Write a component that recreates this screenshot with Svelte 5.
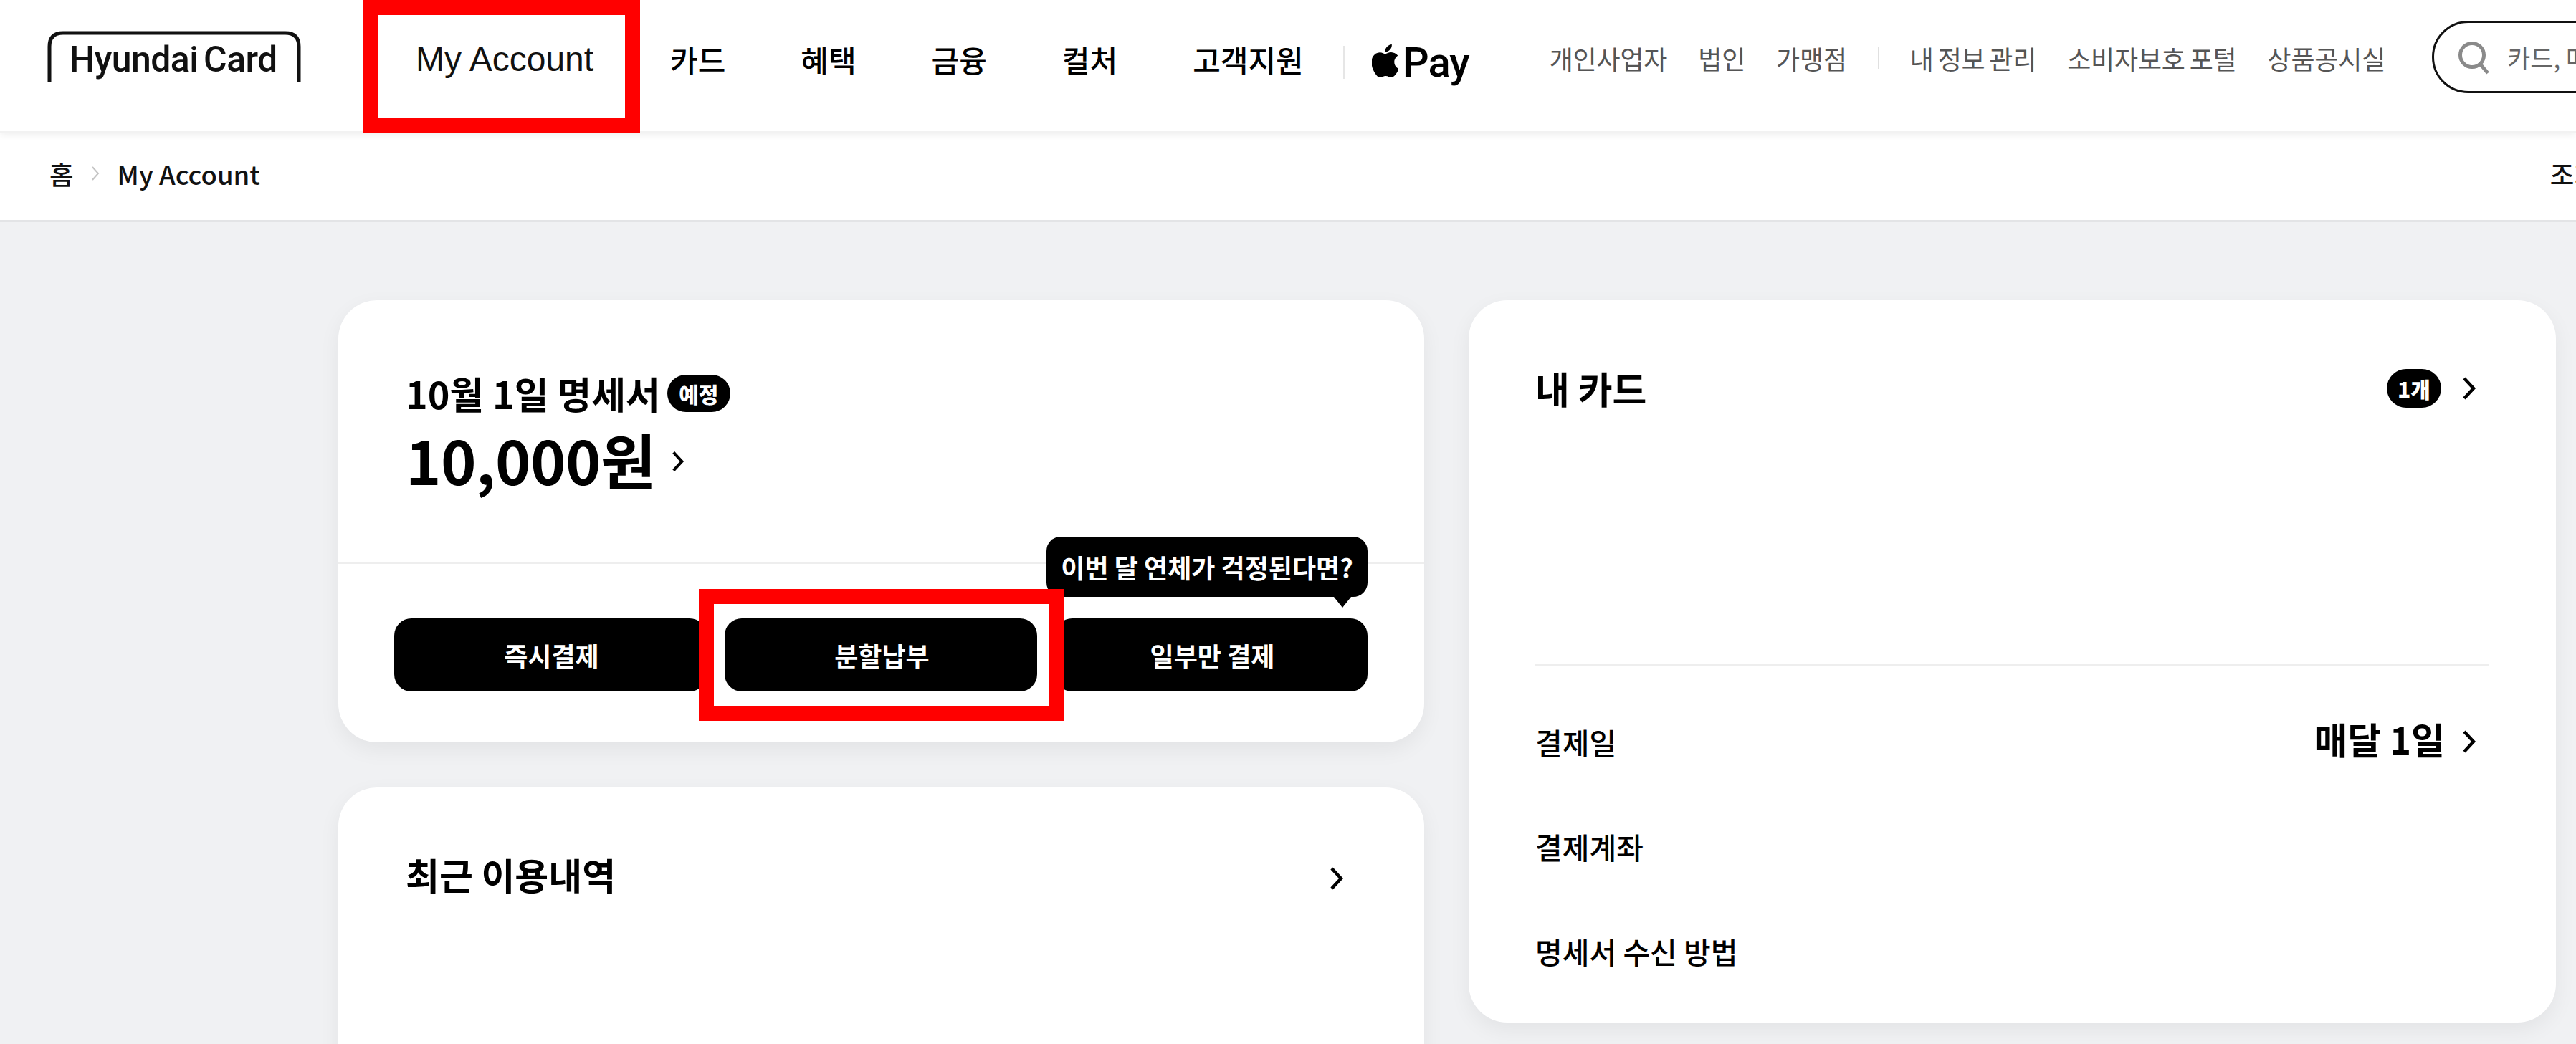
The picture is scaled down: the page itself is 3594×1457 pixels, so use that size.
<script>
  const menus = ['카드', '혜택', '금융', '컬처', '고객지원'];
  const linksA = ['개인사업자', '법인', '가맹점'];
  const linksB = ['내 정보 관리', '소비자보호 포털', '상품공시실'];
  const actions = ['즉시결제', '분할납부', '일부만 결제'];
</script>

{#snippet chevron(cls)}
  <svg class={'chevron ' + cls} viewBox="0 0 20 32" fill="none" aria-hidden="true">
    <path d="M3 2 L16 16 L3 30" stroke="currentColor" stroke-width="4.5" />
  </svg>
{/snippet}

<div class="page">
  <header class="header">
    <a class="logo" href="#top">
      <svg class="logo-tab" viewBox="0 0 354 71" fill="none" aria-hidden="true">
        <path d="M3 71 V22 Q3 3 22 3 H332 Q351 3 351 22 V71" stroke="#111" stroke-width="5" />
      </svg>
      <span class="logo-text">Hyundai Card</span>
    </a>

    <a class="menu-my" href="#top">My Account</a>

    <nav class="menus">
      {#each menus as menu}
        <a class="menu" href="#top">{menu}</a>
      {/each}
    </nav>

    <span class="menu-sep"></span>

    <a class="pay" href="#top">
      <svg class="apple" viewBox="2.5 0 19 24" preserveAspectRatio="none" aria-hidden="true">
        <path fill="#000" d="M12.152 6.896c-.948 0-2.415-1.078-3.96-1.04-2.04.027-3.91 1.183-4.961 3.014-2.117 3.675-.546 9.103 1.519 12.09 1.013 1.454 2.208 3.09 3.792 3.039 1.52-.065 2.09-.987 3.935-.987 1.831 0 2.35.987 3.96.948 1.637-.026 2.676-1.48 3.676-2.948 1.156-1.688 1.636-3.325 1.662-3.415-.039-.013-3.182-1.221-3.22-4.857-.026-3.04 2.48-4.494 2.597-4.559-1.429-2.09-3.623-2.324-4.39-2.376-2-.156-3.675 1.09-4.61 1.09zM15.53 3.83c.843-1.012 1.4-2.427 1.245-3.83-1.207.052-2.662.805-3.532 1.818-.78.896-1.454 2.338-1.273 3.714 1.338.104 2.715-.688 3.559-1.701" />
      </svg>
      <span>Pay</span>
    </a>

    <div class="links">
      {#each linksA as link}
        <a href="#top">{link}</a>
      {/each}
      <span class="link-sep"></span>
      {#each linksB as link}
        <a href="#top">{link}</a>
      {/each}
    </div>

    <div class="search">
      <svg class="search-icon" viewBox="0 0 44 46" fill="none" aria-hidden="true">
        <circle cx="20" cy="19" r="16.5" stroke="#8a8a8a" stroke-width="5" />
        <path d="M31 31 L42 44" stroke="#8a8a8a" stroke-width="5" />
      </svg>
      <span class="search-text">카드, 매장, 혜택 검색</span>
    </div>
  </header>

  <div class="crumbs">
    <div class="crumb-path">
      <span>홈</span>
      <svg class="crumb-arrow" viewBox="0 0 11 20" fill="none" aria-hidden="true">
        <path d="M1 1 L9 10 L1 19" stroke="#c4c4c4" stroke-width="2" />
      </svg>
      <span>My Account</span>
    </div>
    <span class="crumb-side">조회</span>
  </div>

  <main class="main">
    <div class="col">
      <section class="card statement">
        <div class="statement-top">
          <div class="statement-title">
            <span>10월 1일 명세서</span>
            <span class="badge due">예정</span>
          </div>
          <div class="amount">
            <span>10,000원</span>
            {@render chevron('amount-arrow')}
          </div>
        </div>
        <div class="actions">
          {#each actions as action, i}
            <div class="action">
              <button class="btn" type="button">{action}</button>
              {#if i === 1}
                <span class="mark"></span>
              {/if}
              {#if i === 2}
                <div class="tip">이번 달 연체가 걱정된다면?</div>
              {/if}
            </div>
          {/each}
        </div>
      </section>

      <section class="card recent">
        <h2>최근 이용내역</h2>
        {@render chevron('recent-arrow')}
      </section>
    </div>

    <section class="card mycard">
      <div class="mycard-head">
        <h2>내 카드</h2>
        <div class="row-end">
          <span class="badge count">1개</span>
          {@render chevron('row-arrow')}
        </div>
      </div>
      <div class="rule"></div>
      <div class="info first">
        <span>결제일</span>
        <div class="row-end tight">
          <strong>매달 1일</strong>
          {@render chevron('row-arrow')}
        </div>
      </div>
      <div class="info"><span>결제계좌</span></div>
      <div class="info"><span>명세서 수신 방법</span></div>
    </section>
  </main>
</div>

<style>
  :global(body) {
    margin: 0;
    background: #f0f1f3;
  }
  .page {
    width: 3594px;
    height: 1457px;
    overflow: hidden;
    display: flex;
    flex-direction: column;
    font-family: "Noto Sans CJK KR", "Noto Sans", sans-serif;
    color: #000;
  }
  a {
    color: inherit;
    text-decoration: none;
  }

  /* header */
  .header {
    position: relative;
    z-index: 2;
    flex: none;
    height: 166px;
    padding: 0 0 17px 66px;
    display: flex;
    align-items: center;
    background: #fff;
    box-shadow: 0 3px 10px rgba(0, 0, 0, 0.07);
    border-bottom: 2px solid #f2f2f2;
  }
  .logo {
    position: relative;
    flex: none;
    width: 354px;
    height: 71px;
    margin: 0 86px 9px 0;
  }
  .logo-tab {
    position: absolute;
    inset: 0;
    width: 354px;
    height: 71px;
  }
  .logo-text {
    position: absolute;
    left: 31px;
    top: 11px;
    font-family: Roboto, sans-serif;
    font-size: 50px;
    line-height: 58px;
    font-weight: 500;
    letter-spacing: -0.6px;
    word-spacing: -4px;
    white-space: nowrap;
    color: #111;
  }
  .menu-my {
    position: relative;
    flex: none;
    width: 387px;
    box-sizing: border-box;
    padding-left: 74px;
    font-family: "Liberation Sans", sans-serif;
    font-size: 48px;
    line-height: 60px;
    color: #111;
  }
  .menu-my::after {
    content: "";
    position: absolute;
    left: 0;
    top: -53px;
    width: 100%;
    height: 185px;
    box-sizing: border-box;
    border: 21px solid #f00;
  }
  .menus {
    flex: none;
    display: flex;
    gap: 105px;
    margin-left: 42px;
  }
  .menu {
    font-size: 42px;
    line-height: 60px;
    font-weight: 500;
    white-space: nowrap;
  }
  .menu-sep {
    flex: none;
    width: 2px;
    height: 46px;
    margin: 8px 38px 0 55px;
    background: #e6e6e6;
  }
  .pay {
    flex: none;
    display: flex;
    align-items: center;
    gap: 6px;
    margin: 8px 112px 0 0;
    font-family: Roboto, sans-serif;
    font-size: 58px;
    line-height: 60px;
    font-weight: 500;
    letter-spacing: -1px;
  }
  .apple {
    width: 37px;
    height: 46px;
    margin-top: -4px;
  }
  .links {
    flex: none;
    display: flex;
    align-items: center;
    gap: 43px;
    margin-bottom: 4px;
    font-size: 36px;
    line-height: 48px;
    letter-spacing: -0.2px;
    word-spacing: -2px;
    color: #555;
    white-space: nowrap;
  }
  .link-sep {
    width: 2px;
    height: 30px;
    background: #e0e0e0;
  }
  .search {
    flex: none;
    width: 500px;
    height: 101px;
    box-sizing: border-box;
    margin: 0 0 7px 65px;
    padding-left: 33px;
    display: flex;
    align-items: center;
    gap: 25px;
    border: 3px solid #111;
    border-radius: 51px;
  }
  .search-icon {
    flex: none;
    width: 44px;
    height: 46px;
    margin-top: 3px;
  }
  .search-text {
    font-size: 35px;
    color: #666;
    white-space: nowrap;
  }

  /* breadcrumb */
  .crumbs {
    flex: none;
    height: 114px;
    padding: 0 0 8px 69px;
    display: flex;
    align-items: center;
    justify-content: space-between;
    background: #fff;
    border-bottom: 3px solid #e3e4e6;
    font-size: 36.5px;
    font-weight: 500;
    color: #111;
  }
  .crumb-path {
    display: flex;
    align-items: center;
    gap: 25px;
  }
  .crumb-arrow {
    width: 11px;
    height: 20px;
  }
  .crumb-side {
    flex: none;
    margin: 0 -31px 0 0;
    white-space: nowrap;
  }

  /* cards */
  .main {
    flex: 1;
    min-height: 0;
    padding: 109px 0 0 472px;
    display: grid;
    grid-template-columns: 1515px 1517px;
    column-gap: 62px;
    align-items: start;
    background: #f0f1f3;
  }
  .col {
    display: flex;
    flex-direction: column;
    gap: 63px;
  }
  .card {
    background: #fff;
    border-radius: 54px;
    box-shadow: 0 10px 30px rgba(0, 0, 0, 0.06);
  }
  h2 {
    margin: 0;
    font-size: 52px;
    line-height: 60px;
    font-weight: 700;
  }
  .chevron {
    flex: none;
    display: block;
    width: 20px;
    height: 32px;
    color: #000;
  }
  .badge {
    display: inline-flex;
    align-items: center;
    justify-content: center;
    background: #000;
    color: #fff;
    font-weight: 900;
    border-radius: 27px;
  }

  .statement {
    height: 617px;
  }
  .statement-top {
    height: 368px;
    box-sizing: border-box;
    padding: 100px 0 0 94px;
    border-bottom: 3px solid #eeeeee;
  }
  .statement-title {
    display: flex;
    align-items: center;
    gap: 10px;
    font-size: 52px;
    line-height: 60px;
    font-weight: 700;
  }
  .due {
    width: 88px;
    height: 52px;
    font-size: 30px;
  }
  .amount {
    display: flex;
    align-items: center;
    gap: 22px;
    margin-top: 17px;
    font-size: 84px;
    line-height: 90px;
    font-weight: 700;
    letter-spacing: -0.5px;
  }
  .amount-arrow {
    width: 18px;
    height: 32px;
    margin-top: 6px;
  }
  .actions {
    display: grid;
    grid-template-columns: repeat(3, 436px);
    column-gap: 25px;
    padding: 76px 0 0 78px;
  }
  .action {
    position: relative;
  }
  .btn {
    display: block;
    width: 100%;
    height: 102px;
    padding: 0 0 0 3px;
    border: 0;
    border-radius: 24px;
    background: #000;
    color: #fff;
    font-family: inherit;
    font-size: 36px;
    font-weight: 700;
  }
  .mark {
    position: absolute;
    z-index: 2;
    inset: -41px -38px -41px -36px;
    border: 21px solid #f00;
  }
  .tip {
    position: absolute;
    right: 0;
    bottom: calc(100% + 30px);
    box-sizing: border-box;
    width: 448px;
    height: 84px;
    display: flex;
    align-items: center;
    justify-content: center;
    border-radius: 20px;
    background: #000;
    color: #fff;
    font-size: 36px;
    font-weight: 700;
    white-space: nowrap;
  }
  .tip::after {
    content: "";
    position: absolute;
    right: 23px;
    top: 100%;
    border-left: 12px solid transparent;
    border-right: 12px solid transparent;
    border-top: 15px solid #000;
  }

  .recent {
    height: 500px;
    box-sizing: border-box;
    padding: 91px 112px 0 94px;
    display: flex;
    justify-content: space-between;
    align-items: flex-start;
  }
  .recent h2 {
    font-size: 51px;
  }
  .recent-arrow {
    margin-top: 20px;
  }

  .mycard {
    height: 1008px;
    box-sizing: border-box;
    padding: 93px 94px 0 93px;
  }
  .mycard-head,
  .info {
    display: flex;
    align-items: center;
    justify-content: space-between;
    height: 60px;
  }
  .row-end {
    display: flex;
    align-items: center;
    gap: 29px;
    padding-right: 17px;
  }
  .row-end.tight {
    gap: 24px;
  }
  .count {
    width: 76px;
    height: 54px;
    font-size: 30px;
  }
  .rule {
    height: 3px;
    margin-top: 354px;
    background: #eeeeee;
  }
  .info {
    margin-top: 86px;
    font-size: 41px;
    font-weight: 500;
  }
  .info.first {
    margin-top: 76px;
  }
  .info strong {
    margin-bottom: 8px;
    font-size: 51px;
    font-weight: 700;
  }
</style>
